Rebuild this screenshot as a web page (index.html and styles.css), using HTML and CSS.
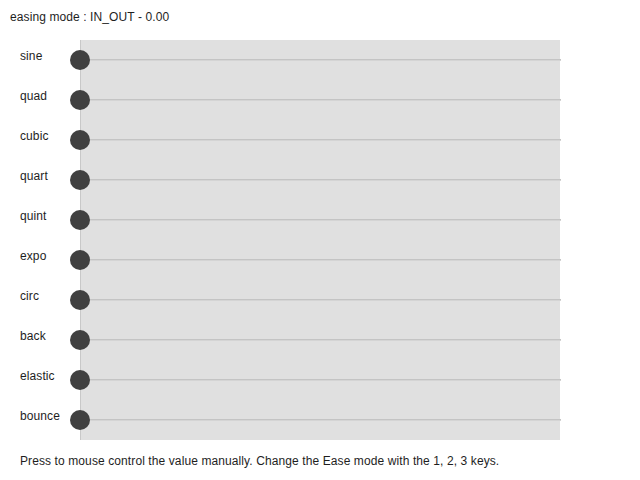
FILE: index.html
```html
<!DOCTYPE html>
<html>
<head>
<meta charset="utf-8">
<link rel="stylesheet" href="styles.css">
</head>
<body>
<div class="header">easing mode : IN_OUT - 0.00</div>
<div class="chart">
  <div class="row"><div class="label">sine</div><div class="track"><span class="knob"></span></div></div>
  <div class="row"><div class="label">quad</div><div class="track"><span class="knob"></span></div></div>
  <div class="row"><div class="label">cubic</div><div class="track"><span class="knob"></span></div></div>
  <div class="row"><div class="label">quart</div><div class="track"><span class="knob"></span></div></div>
  <div class="row"><div class="label">quint</div><div class="track"><span class="knob"></span></div></div>
  <div class="row"><div class="label">expo</div><div class="track"><span class="knob"></span></div></div>
  <div class="row"><div class="label">circ</div><div class="track"><span class="knob"></span></div></div>
  <div class="row"><div class="label">back</div><div class="track"><span class="knob"></span></div></div>
  <div class="row"><div class="label">elastic</div><div class="track"><span class="knob"></span></div></div>
  <div class="row"><div class="label">bounce</div><div class="track"><span class="knob"></span></div></div>
</div>
<div class="footer">Press to mouse control the value manually. Change the Ease mode with the 1, 2, 3 keys.</div>
</body>
</html>
```

FILE: styles.css
```css
html, body {
  margin: 0;
  padding: 0;
  background: #ffffff;
}
body {
  font-family: "Liberation Sans", Arial, sans-serif;
  font-size: 12px;
  line-height: 14px;
  letter-spacing: 0.1px;
  color: #1e1e1e;
}
.header {
  padding: 10px 0 0 10px;
  box-sizing: border-box;
  height: 40px;
}
.chart {
  display: flex;
  flex-direction: column;
}
.row {
  display: flex;
  height: 40px;
}
.label {
  width: 80px;
  box-sizing: border-box;
  padding: 9px 0 0 20px;
}
.track {
  width: 479px;
  background: #e0e0e0;
  border-left: 1px solid #c8c8c8;
  position: relative;
}
.track::after {
  content: "";
  position: absolute;
  left: 0;
  right: -1px;
  top: 19px;
  height: 1px;
  background: #c4c4c4;
  box-shadow: 0 1px 0 #d4d4d4;
}
.knob {
  position: absolute;
  left: -11px;
  top: 10px;
  width: 20px;
  height: 20px;
  border-radius: 50%;
  background: #404040;
  z-index: 1;
}
.footer {
  padding: 14px 0 0 20px;
}
```
